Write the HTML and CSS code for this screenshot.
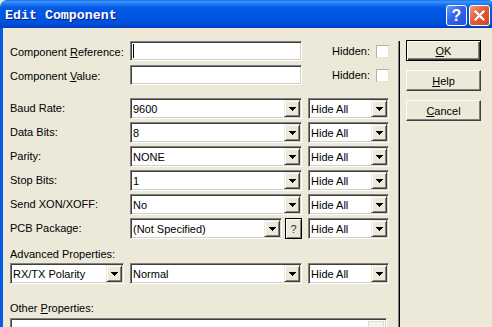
FILE: index.html
```html
<!DOCTYPE html>
<html lang="en">
<head>
  <meta charset="UTF-8">
  <title>Edit Component</title>
  <link rel="stylesheet" href="styles.css">
</head>
<body>

<div class="window">
  <div class="titlebar">
    <span class="title">Edit Component</span>
    <div class="caption-buttons">
      <span class="cap cap-help">?</span>
      <span class="cap cap-close">
        <svg width="13" height="13" viewBox="0 0 13 13"><path d="M2.5 2.5 L10.5 10.5 M10.5 2.5 L2.5 10.5" stroke="#fff" stroke-width="2.2" stroke-linecap="square"/></svg>
      </span>
    </div>
  </div>

  <div class="client">
    <div class="form">
      <!-- Reference / value -->
      <div class="row text-row">
        <label>Component <u>R</u>eference:</label>
        <div class="field"><span class="caret"></span></div>
        <div class="hidden-cell">Hidden: <span class="check"></span></div>
      </div>
      <div class="row text-row">
        <label>Component <u>V</u>alue:</label>
        <div class="field"></div>
        <div class="hidden-cell">Hidden: <span class="check"></span></div>
      </div>

      <!-- Parameters -->
      <div class="combos">
        <div class="row combo-row">
          <label>Baud Rate:</label>
          <div class="combo"><span class="value">9600</span><span class="drop"></span></div>
          <div class="combo"><span class="value">Hide All</span><span class="drop"></span></div>
        </div>
        <div class="row combo-row">
          <label>Data Bits:</label>
          <div class="combo"><span class="value">8</span><span class="drop"></span></div>
          <div class="combo"><span class="value">Hide All</span><span class="drop"></span></div>
        </div>
        <div class="row combo-row">
          <label>Parity:</label>
          <div class="combo"><span class="value">NONE</span><span class="drop"></span></div>
          <div class="combo"><span class="value">Hide All</span><span class="drop"></span></div>
        </div>
        <div class="row combo-row">
          <label>Stop Bits:</label>
          <div class="combo"><span class="value">1</span><span class="drop"></span></div>
          <div class="combo"><span class="value">Hide All</span><span class="drop"></span></div>
        </div>
        <div class="row combo-row">
          <label>Send XON/XOFF:</label>
          <div class="combo"><span class="value">No</span><span class="drop"></span></div>
          <div class="combo"><span class="value">Hide All</span><span class="drop"></span></div>
        </div>
        <div class="row combo-row">
          <label>PCB Package:</label>
          <div class="pcb-cell">
            <div class="combo combo-pcb"><span class="value">(Not Specified)</span><span class="drop"></span></div>
            <span class="qbtn">?</span>
          </div>
          <div class="combo"><span class="value">Hide All</span><span class="drop"></span></div>
        </div>
      </div>

      <!-- Advanced -->
      <div class="section-label">Advanced Properties:</div>
      <div class="row combo-row">
        <div class="combo combo-small"><span class="value">RX/TX Polarity</span><span class="drop"></span></div>
        <div class="combo"><span class="value">Normal</span><span class="drop"></span></div>
        <div class="combo"><span class="value">Hide All</span><span class="drop"></span></div>
      </div>

      <div class="section-label other-label">Other <u>P</u>roperties:</div>
      <div class="memo">
        <span class="scroll-up"></span>
      </div>
    </div>

    <div class="divider"></div>

    <div class="actions">
      <button class="btn btn-default"><u>O</u>K</button>
      <button class="btn"><u>H</u>elp</button>
      <button class="btn"><u>C</u>ancel</button>
    </div>
  </div>
</div>

</body>
</html>
```

FILE: styles.css
```css
* {
  box-sizing: border-box;
}
body {
  margin: 0;
  width: 492px;
  height: 327px;
  overflow: hidden;
  background: #ece9d8;
  font-family: 'Liberation Sans', Arial, sans-serif;
  font-size: 11px;
  color: #000;
}
.window {
  width: 495px;
  height: 327px;
  display: flex;
  flex-direction: column;
}
/* Title bar */
.titlebar {
  height: 28px;
  flex: none;
  display: flex;
  align-items: center;
  padding: 0 5px;
  border-radius: 7px 7px 0 0;
  background: linear-gradient(to bottom, #0a5bd8 0px, #3d95ff 1px, #2b87fa 3px, #0e64e8 6px, #0058e4 9px, #0055e0 18px, #0051da 23px, #0047cf 26px, #003cb8 28px);
}
.title {
  font: bold 13.3px 'Liberation Mono', monospace;
  color: #fff;
  text-shadow: 1px 1px 0 #0a1c8c;
  padding-top: 2px;
}
.caption-buttons {
  margin-left: auto;
  margin-top: 3px;
  display: flex;
  gap: 2px;
}
.cap {
  width: 21px;
  height: 21px;
  border: 1px solid #fff;
  border-radius: 3px;
  display: flex;
  align-items: center;
  justify-content: center;
}
.cap-help {
  background: linear-gradient(135deg, #6a98f7, #3265e6 45%, #2250d6);
  color: #fff;
  font: bold 16px 'Liberation Sans', sans-serif;
}
.cap-close {
  background: linear-gradient(135deg, #f29a7a, #e45e37 45%, #cc4520);
}
/* Client area */
.client {
  flex: 1;
  display: flex;
  border-left: 3px solid #0a5ae6;
  background: #ece9d8;
}
.form {
  width: 395px;
  flex: none;
  padding: 11px 0 0 7px;
}
.row {
  display: grid;
  grid-template-columns: 114px 172px 81px;
  column-gap: 6px;
  height: 24px;
}
.text-row {
  align-items: center;
}
.combo-row {
  align-items: start;
  padding-top: 1px;
}
.row label {
  white-space: nowrap;
}
.text-row label {
  padding-top: 1px;
}
.combo-row label {
  padding-top: 4px;
}
.combos {
  margin-top: 10px;
}
.field {
  height: 20px;
  display: flex;
  align-items: center;
  padding-left: 2px;
  background: #fff;
  border: 1px solid;
  border-color: #808080 #fff #fff #808080;
  box-shadow: inset 1px 1px #404040, inset -1px -1px #d4d0c8;
}
.caret {
  width: 1px;
  height: 14px;
  background: #000;
}
.hidden-cell {
  display: flex;
  justify-content: flex-end;
  align-items: center;
  gap: 6px;
}
.check {
  width: 13px;
  height: 13px;
  background: #fff;
  border: 1px solid;
  border-color: #b5b3a8 #e4e2d8 #e4e2d8 #b5b3a8;
}
/* Combo boxes */
.combo {
  height: 21px;
  display: flex;
  padding: 1px;
  background: #fff;
  border: 1px solid;
  border-color: #808080 #fff #fff #808080;
  box-shadow: inset 1px 1px #404040, inset -1px -1px #d4d0c8;
}
.combo .value {
  flex: 1;
  align-self: center;
  padding-left: 1px;
  white-space: nowrap;
  overflow: hidden;
}
.drop {
  width: 16px;
  flex: none;
  display: flex;
  align-items: center;
  justify-content: center;
  background: #ece9d8;
  border: 1px solid;
  border-color: #ece9d8 #404040 #404040 #ece9d8;
  box-shadow: inset 1px 1px #fff, inset -1px -1px #808080;
}
.drop::after {
  content: "";
  width: 7px;
  height: 4px;
  background:
    linear-gradient(#000, #000) 0 0 / 7px 1px no-repeat,
    linear-gradient(#000, #000) 1px 1px / 5px 1px no-repeat,
    linear-gradient(#000, #000) 2px 2px / 3px 1px no-repeat,
    linear-gradient(#000, #000) 3px 3px / 1px 1px no-repeat;
}
.pcb-cell {
  display: flex;
  gap: 3px;
}
.combo-pcb {
  width: 152px;
}
.combo-small {
  width: 114px;
}
.qbtn {
  width: 17px;
  height: 21px;
  display: flex;
  align-items: center;
  justify-content: center;
  background: #ece9d8;
  border: 1px solid #000;
  box-shadow: inset 1px 1px #fff, inset -1px -1px #808080;
  color: #333;
}
.section-label {
  margin-top: 5px;
  height: 16px;
  line-height: 16px;
}
.other-label {
  margin-top: 14px;
}
.memo {
  width: 377px;
  height: 24px;
  margin-top: 2px;
  display: flex;
  justify-content: flex-end;
  padding: 2px;
  background: #fff;
  border: 1px solid;
  border-color: #808080 #fff #fff #808080;
  box-shadow: inset 1px 1px #404040, inset -1px -1px #d4d0c8;
}
.scroll-up {
  width: 16px;
  height: 16px;
  background: #f3f2ec;
  border: 1px solid #dedcd2;
}
/* Divider + buttons */
.divider {
  width: 2px;
  margin-top: 13px;
  border-left: 1px solid #808080;
  background: #000;
}
.actions {
  padding: 12px 0 0 6px;
  display: flex;
  flex-direction: column;
  gap: 9px;
}
.btn {
  width: 75px;
  height: 21px;
  padding: 0;
  font: 11px 'Liberation Sans', Arial, sans-serif;
  color: #000;
  background: #ece9d8;
  border: 1px solid;
  border-color: #fff #404040 #404040 #fff;
  box-shadow: inset -1px -1px #808080;
}
.btn-default {
  border: 1px solid #000;
  box-shadow: inset 1px 1px #fff, inset -1px -1px #404040, inset -2px -2px #808080;
}
```
